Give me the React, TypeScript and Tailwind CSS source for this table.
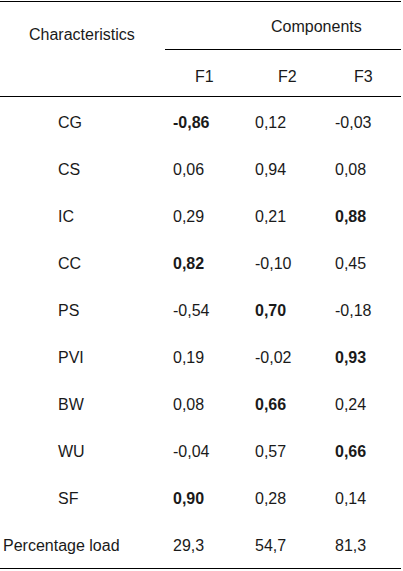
import React from 'react';

interface Row {
    label: string;
    values: [string, string, string];
    bold: [boolean, boolean, boolean];
}

const rows: Row[] = [
    { label: 'CG', values: ['-0,86', '0,12', '-0,03'], bold: [true, false, false] },
    { label: 'CS', values: ['0,06', '0,94', '0,08'], bold: [false, false, false] },
    { label: 'IC', values: ['0,29', '0,21', '0,88'], bold: [false, false, true] },
    { label: 'CC', values: ['0,82', '-0,10', '0,45'], bold: [true, false, false] },
    { label: 'PS', values: ['-0,54', '0,70', '-0,18'], bold: [false, true, false] },
    { label: 'PVI', values: ['0,19', '-0,02', '0,93'], bold: [false, false, true] },
    { label: 'BW', values: ['0,08', '0,66', '0,24'], bold: [false, true, false] },
    { label: 'WU', values: ['-0,04', '0,57', '0,66'], bold: [false, false, true] },
    { label: 'SF', values: ['0,90', '0,28', '0,14'], bold: [true, false, false] },
];

const App = () => {
    return (
        <div className="w-[403px] h-[571px] bg-white text-[#1a1a1a] text-[16px] leading-[16px] font-['Liberation_Sans',Arial,sans-serif]">
            <div className="w-[401px] pt-[1px]">
                <div className="h-px bg-black" />

                {/* header */}
                <div className="flex h-[94px]">
                    <div className="w-[165px] pl-[29px] pt-[24.5px]">Characteristics</div>
                    <div className="flex-1 flex flex-col">
                        <div className="pl-[106px] pt-[17px]">Components</div>
                        <div className="mt-[14px] h-px bg-black" />
                        <div className="grid grid-cols-[90px_80px_1fr] pt-[18.5px]">
                            <div className="pl-[30px]">F1</div>
                            <div className="pl-[23px]">F2</div>
                            <div className="pl-[19px]">F3</div>
                        </div>
                    </div>
                </div>
                <div className="h-px bg-black" />

                {/* body */}
                {rows.map((row) => (
                    <div key={row.label} className="grid grid-cols-[173px_82px_80px_1fr] h-[47.1px] pt-[17.5px]">
                        <div className="pl-[58px]">{row.label}</div>
                        {row.values.map((v, i) => (
                            <div key={i} className={row.bold[i] ? 'font-bold' : ''}>
                                {v}
                            </div>
                        ))}
                    </div>
                ))}
                <div className="grid grid-cols-[173px_82px_80px_1fr] h-[47.1px] pt-[17.5px]">
                    <div className="pl-[3px]">Percentage load</div>
                    <div>29,3</div>
                    <div>54,7</div>
                    <div>81,3</div>
                </div>
                <div className="h-px bg-black" />
            </div>
        </div>
    );
};

export default App;
